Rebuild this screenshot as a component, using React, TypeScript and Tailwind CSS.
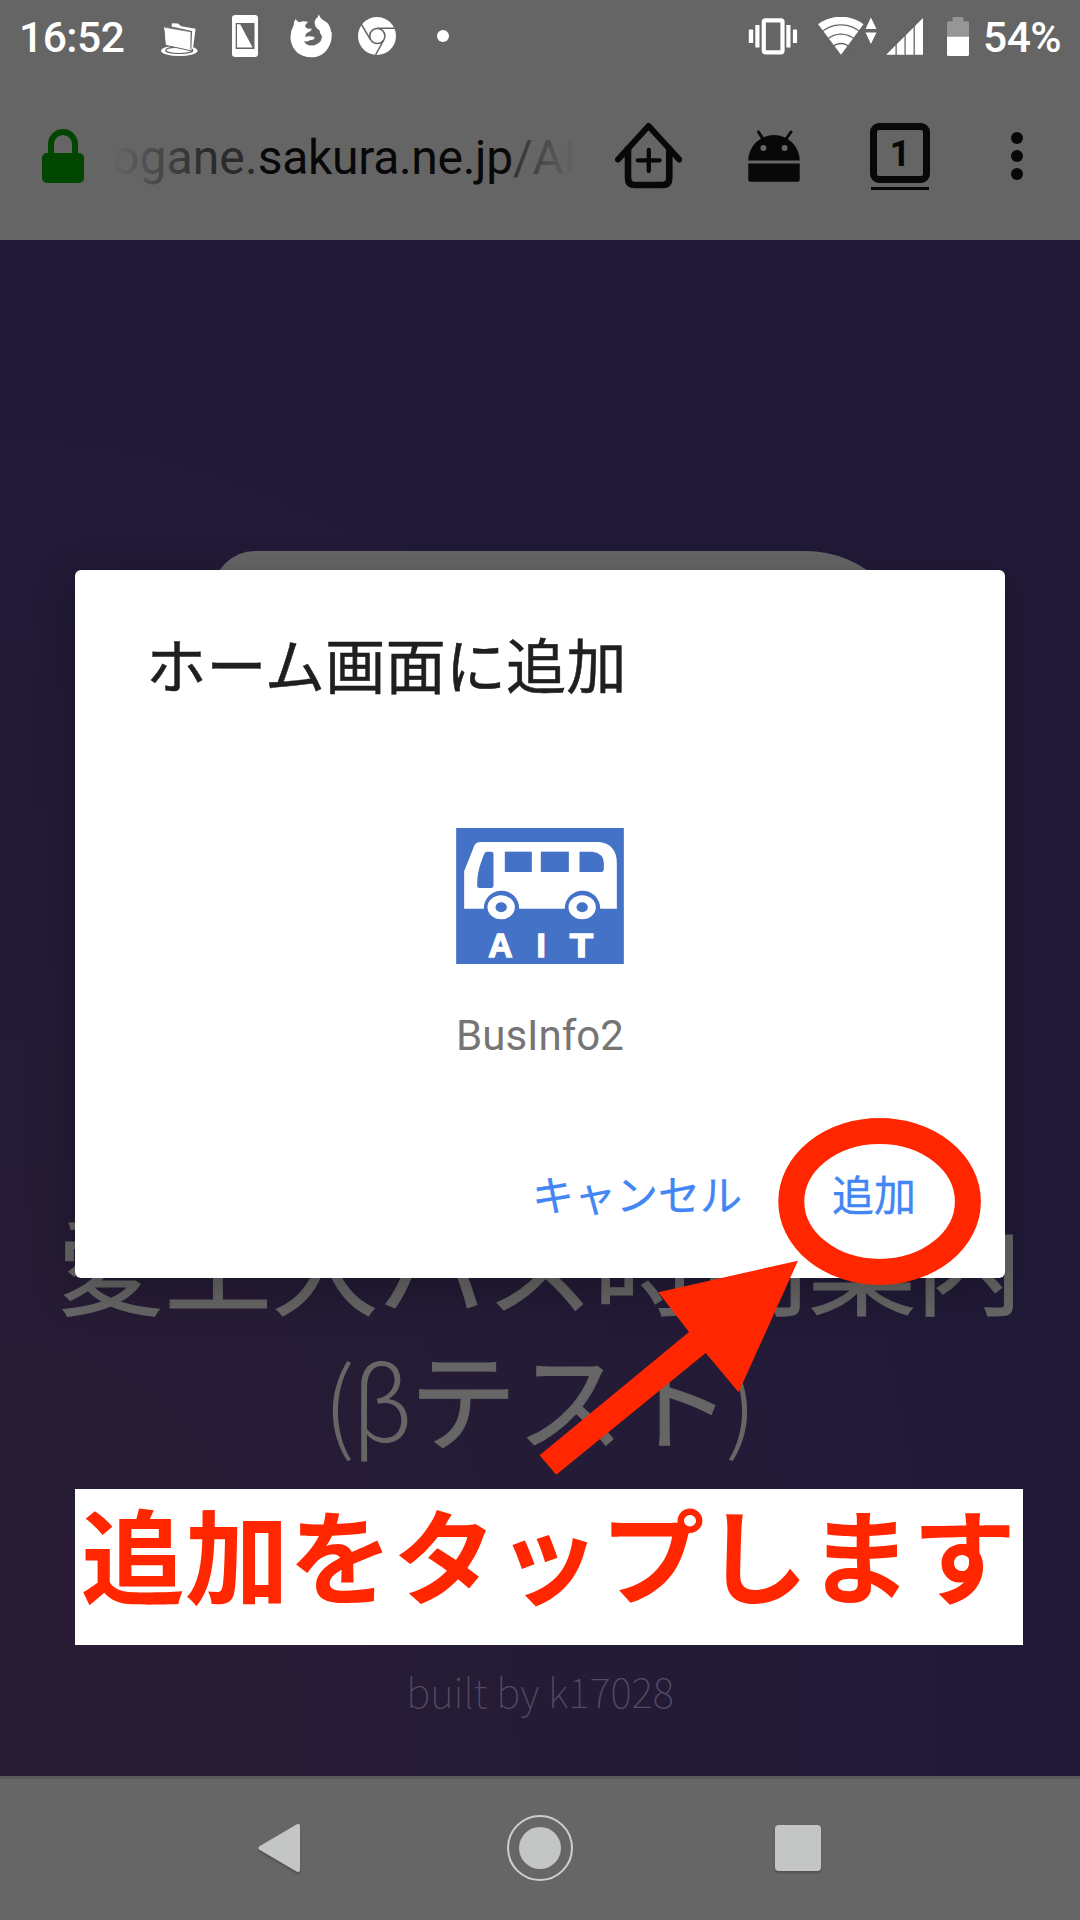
import React from "react";

const cjk = "font-['Noto_Sans_CJK_JP',sans-serif]";

function FolderIcon() {
  return (
    <svg className="ml-[35px] h-[37px] w-[38px] shrink-0" viewBox="160 20 38 37" fill="#fff">
      <ellipse cx="179.3" cy="50.8" rx="18.3" ry="5.2" />
      <ellipse cx="179.3" cy="50.3" rx="13.5" ry="3.2" fill="none" stroke="#656565" strokeWidth="1.2" />
      <path d="M164 26.5 L191.5 31.5 L192 51 L165.5 45.2Z" stroke="#656565" strokeWidth="1" />
      <path d="M171.5 26.4 L172 23.2 L178 23.4 L181.2 26.3 L195.6 28.8 L193 48.5 L191.4 49 L192 31 Z" />
      <path d="M164.3 27 L190.5 31.8 L190.3 49.2 L166 44.7Z" />
      <path d="M165 27.4 L191 31.7 L190.7 49" fill="none" stroke="#656565" strokeWidth=".8" />
    </svg>
  );
}

function PhoneIcon() {
  return (
    <svg className="ml-[34px] h-[42px] w-[26px] shrink-0" viewBox="232 15 26 42">
      <rect x="232" y="15" width="26" height="42" rx="3.2" fill="#fff" />
      <rect x="235.7" y="23" width="18.8" height="26" fill="#656565" />
      <path d="M237 24.2 H240.2 L252.6 47.6 H237Z" fill="#fff" />
    </svg>
  );
}

function FirefoxIcon() {
  return (
    <svg className="ml-[32px] h-[44px] w-[42px] shrink-0" viewBox="420 24 128 132" fill="#fff">
      <path d="M437 38 Q441 45 448 48 Q460 43 475 47 Q467 52 466 60 Q470 69 486 68 Q487 75 471 81 Q466 87 467 93 Q478 88 495 93 Q495 103 480 103 Q472 110 462 105 Q469 119 486 119 Q503 118 513 106 Q518 96 517 90 L511 80 Q513 72 503 68 Q490 55 498 39 Q506 33 508 24 Q512 38 522 42 Q545 54 545 80 L547 76 Q549 97 542 115 Q525 155 485 155 Q432 153 422 103 Q419 78 431 58 Q431 46 437 38Z" />
    </svg>
  );
}

function ChromeIcon() {
  return (
    <svg className="ml-[26px] h-[38px] w-[38px] shrink-0" viewBox="358 17 38 38">
      <circle cx="377" cy="36" r="19" fill="#fff" />
      <g fill="none" stroke="#656565" strokeWidth="1.5">
        <circle cx="377.3" cy="36" r="7.6" />
        <path d="M377 28.3 H395 M361.5 24.5 L370.6 39.8 M383.8 39.8 L375.5 55" />
      </g>
    </svg>
  );
}

function VibrateIcon() {
  return (
    <svg className="h-[37px] w-[50px] shrink-0" viewBox="747.5 18 50 37" fill="#fff">
      <rect x="763.3" y="20.3" width="18.7" height="32" rx="1.5" fill="none" stroke="#fff" strokeWidth="4.2" />
      <rect x="748.3" y="29.5" width="4.4" height="13.5" rx=".6" />
      <rect x="754.8" y="25" width="4.2" height="22.5" rx=".6" />
      <rect x="785.8" y="25" width="4.2" height="22.5" rx=".6" />
      <rect x="792.4" y="29.5" width="4.2" height="13.5" rx=".6" />
    </svg>
  );
}

function WifiIcon() {
  return (
    <svg className="ml-[20px] h-[38px] w-[59px] shrink-0" viewBox="817.5 17 59 38">
      <path d="M840.5 54.8 L817.6 24.2 A38 38 0 0 1 863 24.2Z" fill="#fff" />
      <g fill="none" stroke="#656565" strokeWidth="1.3">
        <circle cx="840.5" cy="54.8" r="30" />
        <circle cx="840.5" cy="54.8" r="20.7" />
        <circle cx="840.5" cy="54.8" r="11.3" />
      </g>
      <path d="M870.4 17.6 L876 29 H865Z M865 32.4 H876 L870.4 44Z" fill="#fff" />
    </svg>
  );
}

function SignalIcon() {
  return (
    <svg className="ml-[9px] h-[37px] w-[37px] shrink-0" viewBox="885.5 17.5 37 37">
      <path d="M885.7 54.3 H922.6 V17.4Z" fill="#fff" />
      <path d="M895.6 17 V55 M904.6 17 V55 M913.7 17 V55" stroke="#656565" strokeWidth="1.3" />
    </svg>
  );
}

function BatteryIcon() {
  return (
    <svg className="ml-[24.5px] h-[39px] w-[22px] shrink-0" viewBox="947 16 22 39">
      <path d="M947 36 V22 Q947 20.3 949 20.3 H952.6 V16 H963.3 V20.3 H967 Q969 20.3 969 22 V36Z" fill="#969696" />
      <path d="M947 35.8 H969 V53.5 Q969 55 967.5 55 H948.5 Q947 55 947 53.5Z" fill="#fff" />
    </svg>
  );
}

function StatusBar() {
  return (
    <div className="flex h-[72px] items-center pl-[19px] text-[42.5px] font-medium text-white">
      <span className="mt-[3px] w-[106px] shrink-0 whitespace-nowrap leading-[48px] tracking-[-0.5px]">16:52</span>
      <div className="mt-[4px]"><FolderIcon /></div>
      <PhoneIcon />
      <FirefoxIcon />
      <ChromeIcon />
      <div className="ml-[41px] size-[12px] rounded-full bg-white" />
      <div className="ml-auto flex items-center pr-[19px]">
        <VibrateIcon />
        <WifiIcon />
        <SignalIcon />
        <BatteryIcon />
        <span className="mt-[3px] ml-[14px] w-[78px] whitespace-nowrap leading-[48px] tracking-[-0.5px]">54%</span>
      </div>
    </div>
  );
}

function Toolbar() {
  return (
    <div className="flex h-[168px] items-center">
      <svg className="ml-[42px] h-[54px] w-[42px] shrink-0" viewBox="0 0 42 54">
        <path d="M9 27 V15 A12 12 0 0 1 33 15 V27" fill="none" stroke="#004600" strokeWidth="6" />
        <rect y="24" width="42" height="30" rx="5" fill="#004600" />
      </svg>
      <div className="relative mt-[4px] ml-[28px] h-[70px] w-[464px] overflow-hidden whitespace-nowrap text-[48px] leading-[70px] tracking-[-0.3px] text-[#2b2b2b]">
        <span className="tracking-[0.1px]">ogane.</span>
        <span className="text-[#080808]">sakura.ne.jp</span>
        <span>/AI</span>
        <div className="absolute inset-y-0 left-0 w-[95px] bg-linear-to-r from-[#656565] to-transparent" />
        <div className="absolute inset-y-0 right-0 w-[72px] bg-linear-to-l from-[#656565] to-transparent" />
      </div>
      <svg className="ml-[39px] h-[68px] w-[67px] shrink-0" viewBox="615 123 67 68" fill="none" stroke="#080808" strokeLinecap="round" strokeLinejoin="round">
        <path d="M618 160.5 L648.6 127 L679.2 160.5" strokeWidth="6" />
        <path d="M628 150 V179 Q628 186 635 186 H662.5 Q669.3 186 669.3 179 V150" strokeWidth="6.6" />
        <path d="M637.8 161.3 H659.6 M648.8 151 V172" strokeWidth="4.3" />
      </svg>
      <svg className="ml-[66px] h-[53px] w-[52px] shrink-0" viewBox="748 130 52 53" fill="#080808">
        <path d="M748.3 160.5 A25.7 25.5 0 0 1 799.7 160.5Z" />
        <path d="M748.3 163.5 H799.7 V179.5 Q799.7 181.7 797.5 181.7 H750.5 Q748.3 181.7 748.3 179.5Z" />
        <path d="M758.5 132 L763 139 M791 132 L786 139" stroke="#080808" strokeWidth="3" strokeLinecap="round" />
        <circle cx="763.4" cy="148" r="3" fill="#656565" />
        <circle cx="784.6" cy="148" r="3" fill="#656565" />
      </svg>
      <div className="ml-[70px] flex w-[60px] flex-col items-center">
        <div className="flex h-[60px] w-[60px] items-center justify-center rounded-[9px] border-[7px] border-[#080808] pt-[2px] text-[36px] font-bold leading-none text-[#080808]">
          1
        </div>
        <div className="mt-[4px] h-[3px] w-[58px] bg-[#080808]" />
      </div>
      <div className="ml-[81px] flex flex-col gap-[6px]">
        <div className="size-[12px] rounded-full bg-[#080808]" />
        <div className="size-[12px] rounded-full bg-[#080808]" />
        <div className="size-[12px] rounded-full bg-[#080808]" />
      </div>
    </div>
  );
}

function BusLogo() {
  return (
    <svg className="h-[136px] w-[168px]" viewBox="79 84 503 408">
      <rect x="79" y="84" width="503" height="408" fill="#4472c6" />
      <path d="M133 138 Q138 126 152 126 H508 Q561 132 561 190 V326 H103 V214Z" fill="#fff" />
      <g fill="#4472c6">
        <path d="M172 155 H184 Q191 155 191 162 V257 Q191 264 184 264 H149 Q142 264 142 257 C142 215 152 190 163 162 Q166 155 172 155Z" />
        <rect x="225" y="155" width="81" height="61" />
        <rect x="333" y="155" width="84" height="61" />
        <path d="M449 155 H488 Q522 160 522 190 V206 Q522 216 512 216 H449Z" />
        <circle cx="215" cy="325" r="53" />
        <circle cx="458" cy="325" r="53" />
      </g>
      <g fill="#fff">
        <ellipse cx="214" cy="322" rx="41" ry="36" />
        <ellipse cx="457" cy="322" rx="41" ry="36" />
      </g>
      <g fill="#4472c6">
        <ellipse cx="214" cy="322" rx="17" ry="15" />
        <ellipse cx="457" cy="322" rx="17" ry="15" />
      </g>
      <g fill="#fff" fontFamily="Liberation Sans, sans-serif" fontWeight="700" fontSize="101" textAnchor="middle" stroke="#fff" strokeWidth="4">
        <text x="212" y="470">A</text>
        <text x="334" y="470">I</text>
        <text x="455" y="470" textLength="70" lengthAdjust="spacingAndGlyphs">T</text>
      </g>
    </svg>
  );
}

function AddDialog() {
  return (
    <div className="absolute top-[570px] left-[75px] flex h-[708px] w-[930px] flex-col rounded-[6px] bg-white shadow-[0_12px_44px_rgba(0,0,0,0.25)]">
      <h2 className={"mt-[57px] ml-[71px] text-[60.3px] leading-[72px] text-[#1f1f1f] [-webkit-text-stroke:0.5px_#1f1f1f] " + cjk}>ホーム画面に追加</h2>
      <div className="mt-[129px] flex flex-col items-center">
        <BusLogo />
        <p className="mt-[47px] text-[42px] leading-[50px] text-[#757575]">BusInfo2</p>
      </div>
      <div className={"mt-[105px] flex justify-end gap-[90px] pr-[89px] text-[42px] leading-[54px] text-[#4285f4] [-webkit-text-stroke:0.3px_#4285f4] " + cjk}>
        <button>キャンセル</button>
        <button>追加</button>
      </div>
    </div>
  );
}

function NavBar() {
  return (
    <div className="relative flex h-[144px] items-center border-t-[3px] border-[#5a5a5a] bg-[#666] pb-[3px]">
      <svg className="ml-[257px] h-[50px] w-[43px] drop-shadow-[0_2px_1px_rgba(0,0,0,0.2)]" viewBox="0 0 43 50">
        <path d="M3.5 25 L41 3 V47Z" fill="#c4c6c5" stroke="#c4c6c5" strokeWidth="4" strokeLinejoin="round" />
      </svg>
      <div className="ml-[207px] flex size-[66px] items-center justify-center rounded-full border-[2.5px] border-[#cfcfcf]">
        <div className="size-[42px] rounded-full bg-[#c4c6c5]" />
      </div>
      <div className="ml-[202px] size-[46px] rounded-[4px] bg-[#c4c6c5] shadow-[0_2px_2px_rgba(0,0,0,0.2)]" />
    </div>
  );
}

export default function App() {
  return (
    <div className="relative flex h-[1920px] w-[1080px] flex-col overflow-hidden bg-[#656565] font-[Roboto,sans-serif]">
      <StatusBar />
      <Toolbar />
      <main className="flex h-[1536px] flex-col items-center bg-[radial-gradient(ellipse_at_0%_100%,#291d34_0%,#241b36_40%,#211a37_65%)] pt-[311px]">
        <div className="mr-[-48px] h-[440px] w-[702px] rounded-tl-[42px] rounded-tr-[110px] bg-[#656565]" />
        <h1 className={"mt-[202px] text-center text-[107.3px] leading-[135px] whitespace-nowrap text-[#666] [-webkit-text-stroke:1px_#666] " + cjk}>
          愛工大バス時間案内
          <br />
          <span className="text-[100px] leading-none font-light tracking-[-3px] [-webkit-text-stroke:0]">(β</span>テスト<span className="ml-[-6px] text-[100px] leading-none font-light [-webkit-text-stroke:0]">)</span>
        </h1>
        <p className={"mt-[198px] text-[40.5px] leading-[60px] font-thin text-[#554c60] " + cjk}>built by k17028</p>
      </main>
      <NavBar />
      <AddDialog />
      <svg className="absolute top-[1110px] left-[530px] h-[370px] w-[460px]" viewBox="530 1110 460 370" fill="#ff2600">
        <ellipse cx="879.6" cy="1201.4" rx="88.3" ry="70.5" fill="none" stroke="#ff2600" strokeWidth="26" />
        <path d="M798 1260.7 L658.3 1292.3 L689 1332 L539.6 1455.3 L556.2 1474.7 L705.7 1353 L738.6 1392.3Z" />
      </svg>
      <div className={"absolute top-[1489px] left-[75px] h-[156px] w-[948px] bg-white pl-[6px] text-[103.9px] leading-[126px] font-bold whitespace-nowrap text-[#ff2600] " + cjk}>
        追加をタップします
      </div>
    </div>
  );
}
